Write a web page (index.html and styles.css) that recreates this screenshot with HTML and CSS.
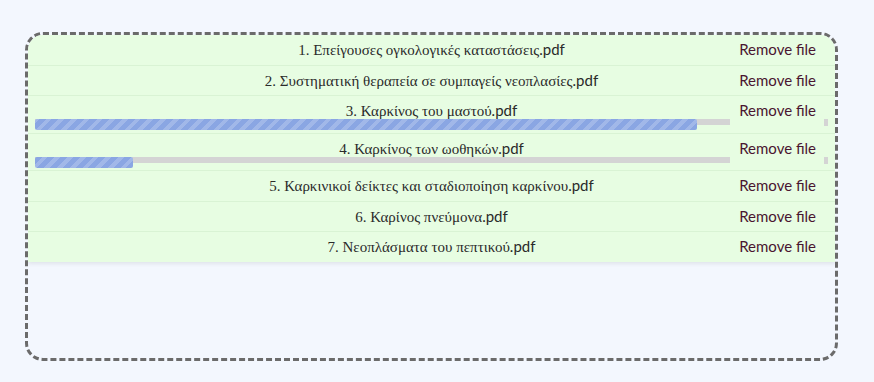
FILE: index.html
```html
<!DOCTYPE html>
<html lang="el">
<head>
    <meta charset="UTF-8">
    <meta name="viewport" content="width=device-width, initial-scale=1.0">
    <title>File upload</title>
    <link rel="stylesheet" href="styles.css">
</head>
<body>
    <div class="dropzone">
        <ul class="file-list">
            <li class="file-row">
                <span class="file-name">1. Επείγουσες ογκολογικές καταστάσεις<span class="ext">.pdf</span></span>
                <a class="remove" href="#">Remove file</a>
            </li>
            <li class="file-row">
                <span class="file-name">2. Συστηματική θεραπεία σε συμπαγείς νεοπλασίες<span class="ext">.pdf</span></span>
                <a class="remove" href="#">Remove file</a>
            </li>
            <li class="file-row uploading">
                <span class="file-name">3. Καρκίνος του μαστού<span class="ext">.pdf</span></span>
                <a class="remove" href="#">Remove file</a>
                <div class="progress"><div class="progress-fill" style="width: 95.3%"></div></div>
                <span class="progress-end"></span>
            </li>
            <li class="file-row uploading">
                <span class="file-name">4. Καρκίνος των ωοθηκών<span class="ext">.pdf</span></span>
                <a class="remove" href="#">Remove file</a>
                <div class="progress"><div class="progress-fill" style="width: 14.1%"></div></div>
                <span class="progress-end"></span>
            </li>
            <li class="file-row">
                <span class="file-name">5. Καρκινικοί δείκτες και σταδιοποίηση καρκίνου<span class="ext">.pdf</span></span>
                <a class="remove" href="#">Remove file</a>
            </li>
            <li class="file-row">
                <span class="file-name">6. Καρίνος πνεύμονα<span class="ext">.pdf</span></span>
                <a class="remove" href="#">Remove file</a>
            </li>
            <li class="file-row">
                <span class="file-name">7. Νεοπλάσματα του πεπτικού<span class="ext">.pdf</span></span>
                <a class="remove" href="#">Remove file</a>
            </li>
        </ul>
    </div>
</body>
</html>
```
FILE: styles.css
```css
body {
    margin: 0;
    padding: 32px 36px 0 25px;
    background-color: #f3f7fe;
    font-family: Lato, "Liberation Sans", sans-serif;
    font-size: 15px;
    color: #333;
}
.dropzone {
    box-sizing: border-box;
    width: 813px;
    height: 329px;
    border: 3px dashed #6b6b6b;
    border-radius: 18px;
    overflow: hidden;
}
.file-list {
    list-style: none;
    margin: 0;
    padding: 0;
    background-color: #e7fde2;
    box-shadow: 0 2px 4px rgba(0, 0, 0, 0.08);
}
.file-row {
    display: grid;
    grid-template-columns: 1fr 98px;
    grid-template-rows: 17px;
    padding: 6px 7px 6.5px;
    border-bottom: 1px solid #d9f3d4;
    line-height: 17px;
}
.file-row.uploading {
    grid-template-rows: 17px 7px;
}
.file-row:last-child {
    border-bottom: none;
}
.file-name {
    grid-column: 1 / -1;
    grid-row: 1;
    text-align: center;
    font-family: "Liberation Serif", "DejaVu Serif", serif;
    font-size: 15px;
    color: #2a2a2a;
    white-space: nowrap;
}
.file-name .ext {
    font-family: Lato, "Liberation Sans", sans-serif;
}
.remove {
    grid-column: 2;
    grid-row: 1;
    justify-self: end;
    margin-right: 12px;
    color: #4a1530;
    text-decoration: none;
    white-space: nowrap;
}
.progress {
    grid-column: 1;
    grid-row: 2;
    background: linear-gradient(#d4d4d4, #d4d4d4) no-repeat;
    background-size: 100% 6px;
}
.progress-fill {
    height: 11px;
    border-radius: 2px;
    background-color: #8aa6e3;
    background-image: repeating-linear-gradient(
        -45deg,
        transparent 0,
        transparent 5px,
        rgba(255, 255, 255, 0.2) 5px,
        rgba(255, 255, 255, 0.2) 9px
    );
}
.progress-end {
    grid-column: 2;
    grid-row: 2;
    justify-self: end;
    width: 4px;
    height: 7px;
    background-color: #d4d4d4;
}
```
